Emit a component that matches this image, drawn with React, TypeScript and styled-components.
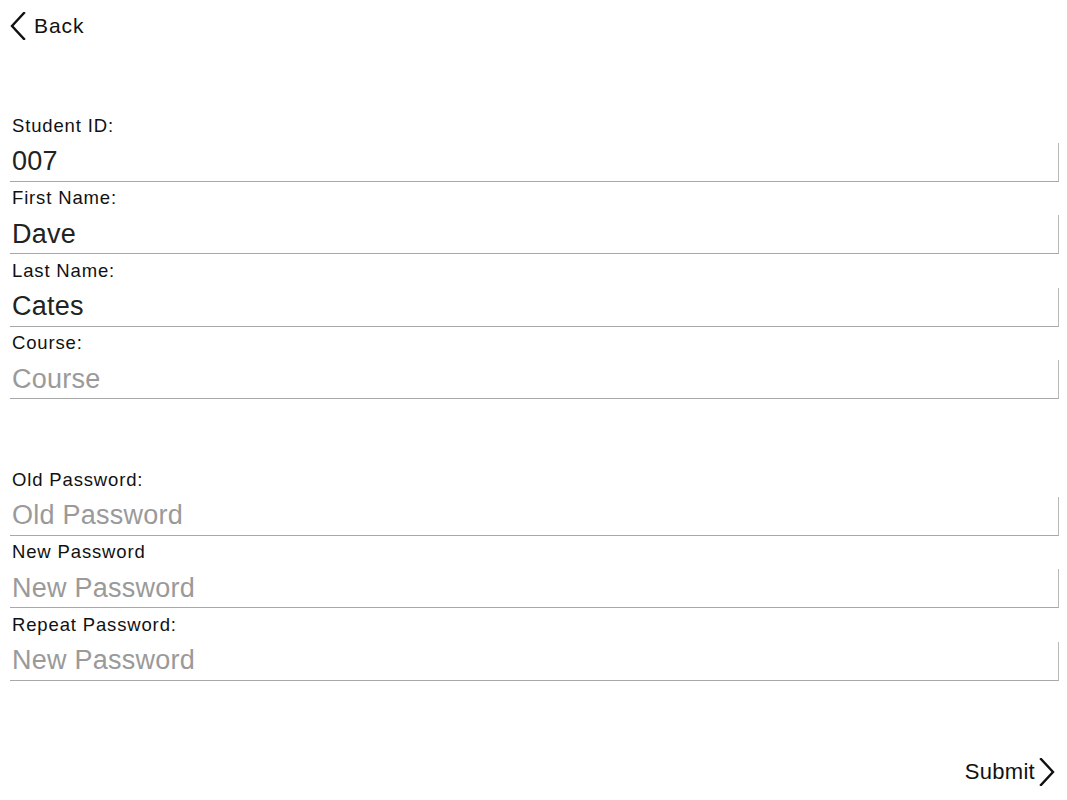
import { createGlobalStyle, styled } from 'styled-components'

const GlobalStyle = createGlobalStyle`
  html, body {
    margin: 0;
    padding: 0;
    background: #fff;
  }
  body {
    font-family: "Liberation Sans", Arial, sans-serif;
    color: #111;
  }
`

type Field = {
  label: string
  value?: string
  placeholder: string
}

const profileFields: Field[] = [
  { label: 'Student ID:', value: '007', placeholder: 'Student ID' },
  { label: 'First Name:', value: 'Dave', placeholder: 'First Name' },
  { label: 'Last Name:', value: 'Cates', placeholder: 'Last Name' },
  { label: 'Course:', placeholder: 'Course' },
]

const passwordFields: Field[] = [
  { label: 'Old Password:', placeholder: 'Old Password' },
  { label: 'New Password', placeholder: 'New Password' },
  { label: 'Repeat Password:', placeholder: 'New Password' },
]

function Chevron({ dir }: { dir: 'left' | 'right' }) {
  return (
    <svg width="16" height="28" viewBox="0 0 16 28" fill="none">
      <path
        d={dir === 'left' ? 'M14 1 L2 14 L14 27' : 'M2 1 L14 14 L2 27'}
        stroke="#111"
        strokeWidth="2.4"
        strokeLinecap="square"
        strokeLinejoin="miter"
      />
    </svg>
  )
}

function FieldGroup({ fields }: { fields: Field[] }) {
  return (
    <Group>
      {fields.map((f) => (
        <FieldRow key={f.label}>
          <Label>{f.label}</Label>
          <InputBox>
            <Input defaultValue={f.value} placeholder={f.placeholder} />
          </InputBox>
        </FieldRow>
      ))}
    </Group>
  )
}

function App() {
  return (
    <Page>
      <GlobalStyle />
      <Header>
        <NavButton type="button">
          <Chevron dir="left" />
          <span>Back</span>
        </NavButton>
      </Header>
      <Form>
        <FieldGroup fields={profileFields} />
        <FieldGroup fields={passwordFields} />
      </Form>
      <Footer>
        <SubmitButton type="button">
          <span>Submit</span>
          <Chevron dir="right" />
        </SubmitButton>
      </Footer>
    </Page>
  )
}
export default App

const Page = styled.div`
  width: 1067px;
  height: 800px;
  box-sizing: border-box;
  padding: 0 8px 0 10px;
  display: flex;
  flex-direction: column;
`

const Header = styled.header`
  height: 52px;
  display: flex;
  align-items: center;
`

const NavButton = styled.button`
  display: flex;
  align-items: center;
  gap: 8px;
  border: none;
  background: none;
  padding: 0;
  cursor: pointer;
  font-family: "Liberation Sans", Arial, sans-serif;
  font-size: 21px;
  letter-spacing: 0.9px;
  color: #111;
`

const Form = styled.form`
  padding-top: 57px;
  display: flex;
  flex-direction: column;
  gap: 64px;
`

const Group = styled.div`
  display: flex;
  flex-direction: column;
`

const FieldRow = styled.div`
  display: flex;
  flex-direction: column;
`

const Label = styled.label`
  padding: 6.5px 0 7px 2px;
  line-height: 20px;
  font-size: 18.5px;
  letter-spacing: 0.85px;
  color: #111;
`

const InputBox = styled.div`
  height: 38px;
  border-bottom: 1.5px solid #a8a8a8;
  border-right: 1.5px solid #b8b8b8;
  display: flex;
  align-items: center;
`

const Input = styled.input`
  width: 100%;
  border: none;
  outline: none;
  background: transparent;
  padding: 0 0 0 2px;
  font-family: "Liberation Sans", Arial, sans-serif;
  font-size: 27px;
  letter-spacing: 0.25px;
  color: #222;

  &::placeholder {
    color: #9a9a9a;
  }
`

const Footer = styled.div`
  margin-top: auto;
  height: 60px;
  display: flex;
  justify-content: flex-end;
  align-items: center;
  padding-top: 4px;
  padding-right: 4px;
  box-sizing: border-box;
`

const SubmitButton = styled(NavButton)`
  gap: 4px;
  font-size: 22px;
  letter-spacing: 0.3px;
`
